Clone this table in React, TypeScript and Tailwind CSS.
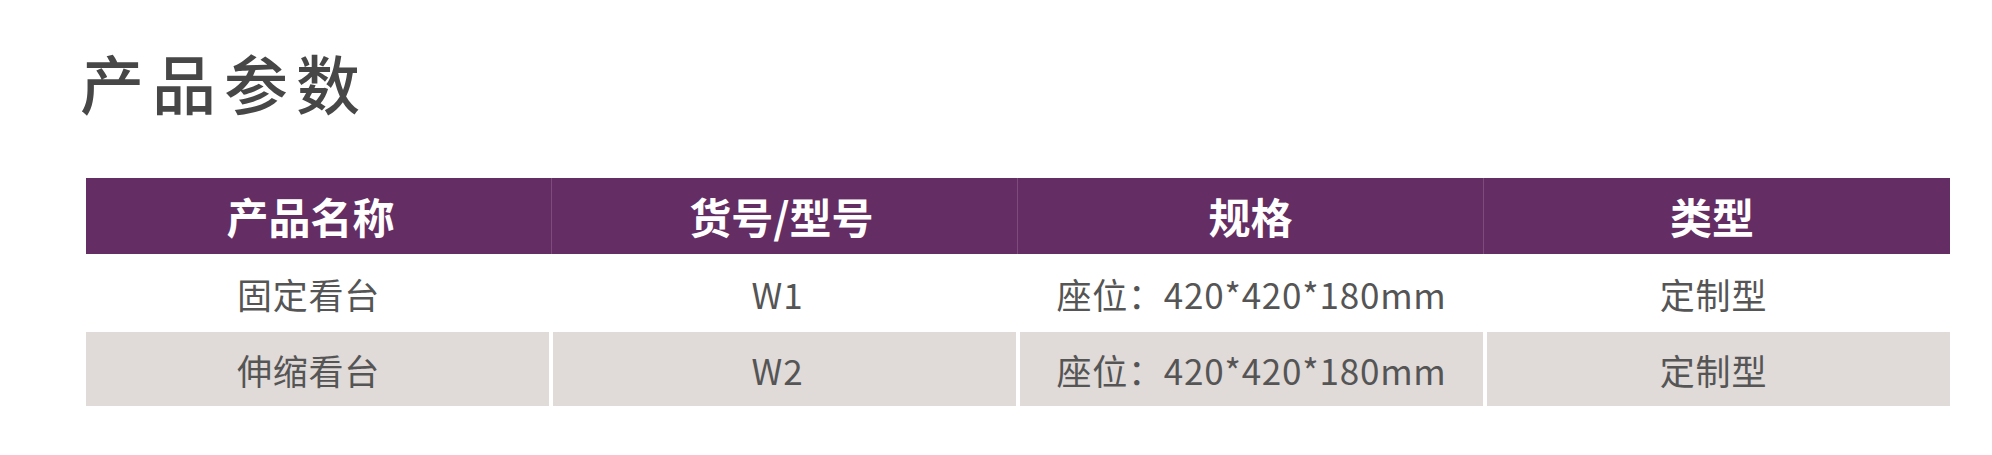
const headers = ["产品名称", "货号/型号", "规格", "类型"];
// small right padding per column, the source text sits a bit left of centre
const headPad = ["pr-[16px]", "pr-[6px]", "", "pr-[10px]"];
const bodyPad = ["pr-[18px]", "pr-[14px]", "", "pr-[10px]"];

const rows = [
    { name: "固定看台", code: "W1", spec: "座位：420*420*180mm", type: "定制型", shaded: false },
    { name: "伸缩看台", code: "W2", spec: "座位：420*420*180mm", type: "定制型", shaded: true },
];

const cjk = { fontFamily: '"Noto Sans CJK SC", "Noto Sans", sans-serif' };

export default function App() {
    return (
        <div className="w-[1992px] h-[455px] bg-white overflow-hidden" style={cjk}>
            {/* Title */}
            <div className="pl-[80px] pt-[49px] h-[178px]">
                <h1 className="text-[64px] leading-none font-medium text-[#474747] tracking-[8px]">
                    产品参数
                </h1>
            </div>

            {/* Table */}
            <div className="ml-[86px] w-[1864px]">
                {/* Header Row */}
                <div className="grid grid-cols-4 h-[76px] bg-[#642d63]">
                    {headers.map((h, i) => (
                        <div
                            key={h}
                            className={`flex items-center justify-center text-white text-[42px] font-bold leading-none ${headPad[i]} ${
                                i < headers.length - 1 ? "border-r border-[#7d4c7c]" : ""
                            }`}
                        >
                            {h}
                        </div>
                    ))}
                </div>

                {/* Body Rows */}
                {rows.map((row, r) => (
                    <div
                        key={row.code}
                        className={`grid grid-cols-4 gap-x-[4px] ${r === 0 ? "h-[78px]" : "h-[74px]"}`}
                    >
                        {[row.name, row.code, row.spec, row.type].map((cell, i) => (
                            <div
                                key={i}
                                className={`flex items-center justify-center text-[35px] leading-none tracking-[0.8px] text-[#555555] ${bodyPad[i]} ${
                                    row.shaded ? "bg-[#e0dad8]" : "bg-white"
                                }`}
                            >
                                {cell}
                            </div>
                        ))}
                    </div>
                ))}
            </div>
        </div>
    );
}
